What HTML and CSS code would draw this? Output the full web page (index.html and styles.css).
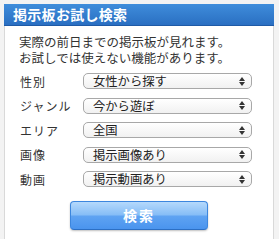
FILE: index.html
```html
<!DOCTYPE html>
<html lang="ja">
<head>
<meta charset="utf-8">
<link rel="stylesheet" href="styles.css">
</head>
<body>
<div class="page">
  <div class="panel">
    <div class="head">掲示板お試し検索</div>
    <div class="body">
      <div class="intro"><div class="line">実際の前日までの掲示板が見れます。</div><div class="line">お試しでは使えない機能があります。</div></div>
      <div class="rows">
        <div class="row"><span class="label">性別</span><div class="sel"><span>女性から探す</span><span class="arr"><i class="up"></i><i class="dn"></i></span></div></div>
        <div class="row"><span class="label">ジャンル</span><div class="sel"><span>今から遊ぼ</span><span class="arr"><i class="up"></i><i class="dn"></i></span></div></div>
        <div class="row"><span class="label">エリア</span><div class="sel"><span>全国</span><span class="arr"><i class="up"></i><i class="dn"></i></span></div></div>
        <div class="row"><span class="label">画像</span><div class="sel"><span>掲示画像あり</span><span class="arr"><i class="up"></i><i class="dn"></i></span></div></div>
        <div class="row"><span class="label">動画</span><div class="sel"><span>掲示動画あり</span><span class="arr"><i class="up"></i><i class="dn"></i></span></div></div>
      </div>
      <div class="btnwrap"><div class="btn">検索</div></div>
    </div>
  </div>
</div>
</body>
</html>
```
FILE: styles.css
```css
html, body { margin: 0; padding: 0; }
body {
  background: #f3f3f3;
  font-family: "Noto Sans CJK JP", "Noto Sans", sans-serif;
  color: #333;
  height: 239px;
  overflow: hidden;
}
.page { padding: 4px 0 0 4px; }
.panel { width: 270px; }
.head {
  height: 22px;
  box-sizing: border-box;
  background: linear-gradient(#3f8ddb, #2a6fc2);
  border-bottom: 1px solid #1f5aa6;
  color: #fff;
  font-weight: bold;
  font-size: 14px;
  line-height: 21px;
  padding-left: 9px;
  letter-spacing: 0.3px;
}
.body {
  background: #fff;
  border: 1px solid #d9d9d9;
  border-top: none;
  height: 222px;
  box-sizing: border-box;
  padding: 8px 0 0 0;
}
.intro {
  margin: 0 0 0 14px;
  font-size: 12.5px;
  color: #333;
}
.line { height: 16px; line-height: 16px; }
.rows {
  margin-top: 7px;
  display: flex;
  flex-direction: column;
  gap: 8.5px;
}
.row {
  display: flex;
  align-items: center;
  height: 16px;
}
.label {
  width: 63px;
  padding-left: 15px;
  font-size: 12px;
  letter-spacing: 1px;
  color: #333;
}
.sel {
  width: 169px;
  height: 16px;
  box-sizing: border-box;
  border: 1px solid #a8a8a8;
  border-radius: 5px;
  background: linear-gradient(#ffffff, #f1f1f1);
  display: flex;
  align-items: center;
  justify-content: space-between;
  padding: 0 6px 0 9px;
  font-size: 12.3px;
  color: #222;
}
.arr { display: flex; flex-direction: column; gap: 1px; }
.arr i { display: block; width: 0; height: 0; border-left: 3px solid transparent; border-right: 3px solid transparent; }
.arr .up { border-bottom: 4px solid #333; }
.arr .dn { border-top: 4px solid #333; }
.btnwrap { padding: 14px 0 0 65px; }
.btn {
  width: 138px;
  height: 29px;
  box-sizing: border-box;
  border-radius: 4px;
  border: 1px solid #3c86de;
  border-bottom-color: #2c6fc4;
  background: linear-gradient(#b5d9fc 0%, #86bdf6 48%, #5fa3f2 52%, #4a94ee 100%);
  box-shadow: 0 1px 2px rgba(0,0,0,0.25);
  color: #fff;
  font-weight: bold;
  font-size: 14px;
  letter-spacing: 2px;
  text-align: center;
  line-height: 27px;
}
```
